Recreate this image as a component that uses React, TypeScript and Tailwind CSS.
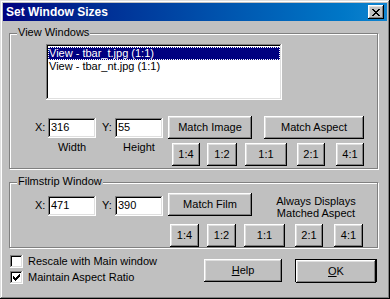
const raised =
  "shadow-[inset_-1px_-1px_#000,inset_1px_1px_#fff,inset_-2px_-2px_#808080,inset_2px_2px_#dfdfdf]";
const sunken =
  "shadow-[inset_-1px_-1px_#fff,inset_1px_1px_#808080,inset_-2px_-2px_#dfdfdf,inset_2px_2px_#000]";
const etched = "border border-[#808080] shadow-[inset_1px_1px_#fff,1px_1px_#fff]";

function Btn({ className, children }: { className: string; children: React.ReactNode }) {
  return (
    <div className={`flex h-[23px] items-center justify-center bg-[#c0c0c0] ${raised} ${className}`}>
      {children}
    </div>
  );
}

function Field({ value }: { value: string }) {
  return (
    <div className={`mt-[2px] h-[20px] w-[48px] bg-white pl-[3px] pt-[2px] leading-[14px] ${sunken}`}>
      {value}
    </div>
  );
}

function CloseIcon() {
  const cells = [
    [0, 0], [1, 0], [6, 0], [7, 0],
    [1, 1], [2, 1], [5, 1], [6, 1],
    [2, 2], [3, 2], [4, 2], [5, 2],
    [3, 3], [4, 3],
    [2, 4], [3, 4], [4, 4], [5, 4],
    [1, 5], [2, 5], [5, 5], [6, 5],
    [0, 6], [1, 6], [6, 6], [7, 6],
  ];
  return (
    <svg width="8" height="7" viewBox="0 0 8 7" shapeRendering="crispEdges">
      {cells.map(([x, y]) => (
        <rect key={`${x}-${y}`} x={x} y={y} width="1" height="1" fill="#000" />
      ))}
    </svg>
  );
}

function Check({ checked }: { checked?: boolean }) {
  const cells = [
    [6, 0], [5, 1], [6, 1], [0, 2], [4, 2], [5, 2], [6, 2],
    [0, 3], [1, 3], [3, 3], [4, 3], [5, 3],
    [0, 4], [1, 4], [2, 4], [3, 4], [4, 4],
    [1, 5], [2, 5], [3, 5], [2, 6],
  ];
  return (
    <div className={`flex h-[13px] w-[13px] shrink-0 items-center justify-center bg-white ${sunken}`}>
      {checked && (
        <svg width="7" height="7" viewBox="0 0 7 7" shapeRendering="crispEdges">
          {cells.map(([x, y]) => (
            <rect key={`${x}-${y}`} x={x} y={y} width="1" height="1" fill="#000" />
          ))}
        </svg>
      )}
    </div>
  );
}

export default function App() {
  return (
    <div className="h-[299px] w-[390px] bg-[#c0c0c0] p-[3px] font-['Liberation_Sans',Arial,sans-serif] text-[11px] leading-[13px] text-black shadow-[inset_-1px_-1px_#000,inset_1px_1px_#dfdfdf,inset_-2px_-2px_#808080,inset_2px_2px_#fff]">
      {/* title bar */}
      <div className="flex h-[18px] items-center justify-between bg-gradient-to-r from-[#000080] to-[#1084d0] pl-[3px]">
        <span className="text-[12px] font-bold text-white">Set Window Sizes</span>
        <div className={`mr-[3px] flex h-[14px] w-[16px] items-center justify-center bg-[#c0c0c0] ${raised}`}>
          <CloseIcon />
        </div>
      </div>

      {/* view windows */}
      <div className={`relative ml-[6px] mt-[12px] h-[136px] w-[369px] ${etched}`}>
        <span className="absolute left-[7px] top-[-8px] bg-[#c0c0c0] px-[1px]">View Windows</span>
        <div className={`ml-[36px] mt-[10px] h-[56px] w-[236px] bg-white p-[2px] pt-[3px] ${sunken}`}>
          <div className="h-[13px] border border-dotted border-white bg-[#000080] pl-[0px] leading-[11px] text-white">
            View - tbar_t.jpg (1:1)
          </div>
          <div className="h-[13px] pl-[1px] leading-[13px]">View - tbar_nt.jpg (1:1)</div>
        </div>

        <div className="mt-[16px] flex items-start">
          <span className="mt-[5px] w-[38px] pl-[25px]">X:</span>
          <Field value="316" />
          <span className="mt-[5px] w-[19px] pl-[6px]">Y:</span>
          <Field value="55" />
          <Btn className="ml-[5px] w-[84px]">Match Image</Btn>
          <Btn className="ml-[12px] w-[100px]">Match Aspect</Btn>
        </div>
        <div className="mt-[4px] flex items-start">
          <div className="-mt-[2px] ml-[38px] w-[48px] text-center">Width</div>
          <div className="-mt-[2px] ml-[19px] w-[48px] text-center">Height</div>
          <Btn className="ml-[9px] w-[28px]">1:4</Btn>
          <Btn className="ml-[7px] w-[30px]">1:2</Btn>
          <Btn className="ml-[8px] w-[42px]">1:1</Btn>
          <Btn className="ml-[10px] w-[28px]">2:1</Btn>
          <Btn className="ml-[11px] w-[28px]">4:1</Btn>
        </div>
      </div>

      {/* filmstrip window */}
      <div className={`relative ml-[6px] mt-[13px] h-[66px] w-[369px] ${etched}`}>
        <span className="absolute left-[7px] top-[-8px] bg-[#c0c0c0] px-[1px]">Filmstrip Window</span>
        <div className="mt-[10px] flex items-start">
          <span className="mt-[6px] w-[38px] pl-[25px]">X:</span>
          <div className="mt-[1px]">
            <Field value="471" />
          </div>
          <span className="mt-[6px] w-[19px] pl-[6px]">Y:</span>
          <div className="mt-[1px]">
            <Field value="390" />
          </div>
          <Btn className="ml-[5px] w-[84px]">Match Film</Btn>
          <div className="ml-[12px] mt-[2px] w-[104px] text-center leading-[12px]">
            Always Displays
            <br />
            Matched Aspect
          </div>
        </div>
        <div className="mt-[5px] flex items-start">
          <Btn className="ml-[160px] w-[29px]">1:4</Btn>
          <Btn className="ml-[8px] w-[29px]">1:2</Btn>
          <Btn className="ml-[8px] w-[41px]">1:1</Btn>
          <Btn className="ml-[10px] w-[28px]">2:1</Btn>
          <Btn className="ml-[11px] w-[29px]">4:1</Btn>
        </div>
      </div>

      {/* bottom */}
      <div className="mt-[7px] flex items-start">
        <div className="ml-[7px] flex w-[194px] flex-col gap-[3px]">
          <div className="flex items-center">
            <Check />
            <span className="ml-[5px]">Rescale with Main window</span>
          </div>
          <div className="flex items-center">
            <Check checked />
            <span className="ml-[5px]">Maintain Aspect Ratio</span>
          </div>
        </div>
        <Btn className="mt-[4px] w-[78px]">
          <span>
            <u>H</u>elp
          </span>
        </Btn>
        <div className="ml-[13px] mt-[4px] h-[23px] w-[82px] border border-black">
          <Btn className="h-[21px] w-full">
            <span>
              <u>O</u>K
            </span>
          </Btn>
        </div>
      </div>
    </div>
  );
}
